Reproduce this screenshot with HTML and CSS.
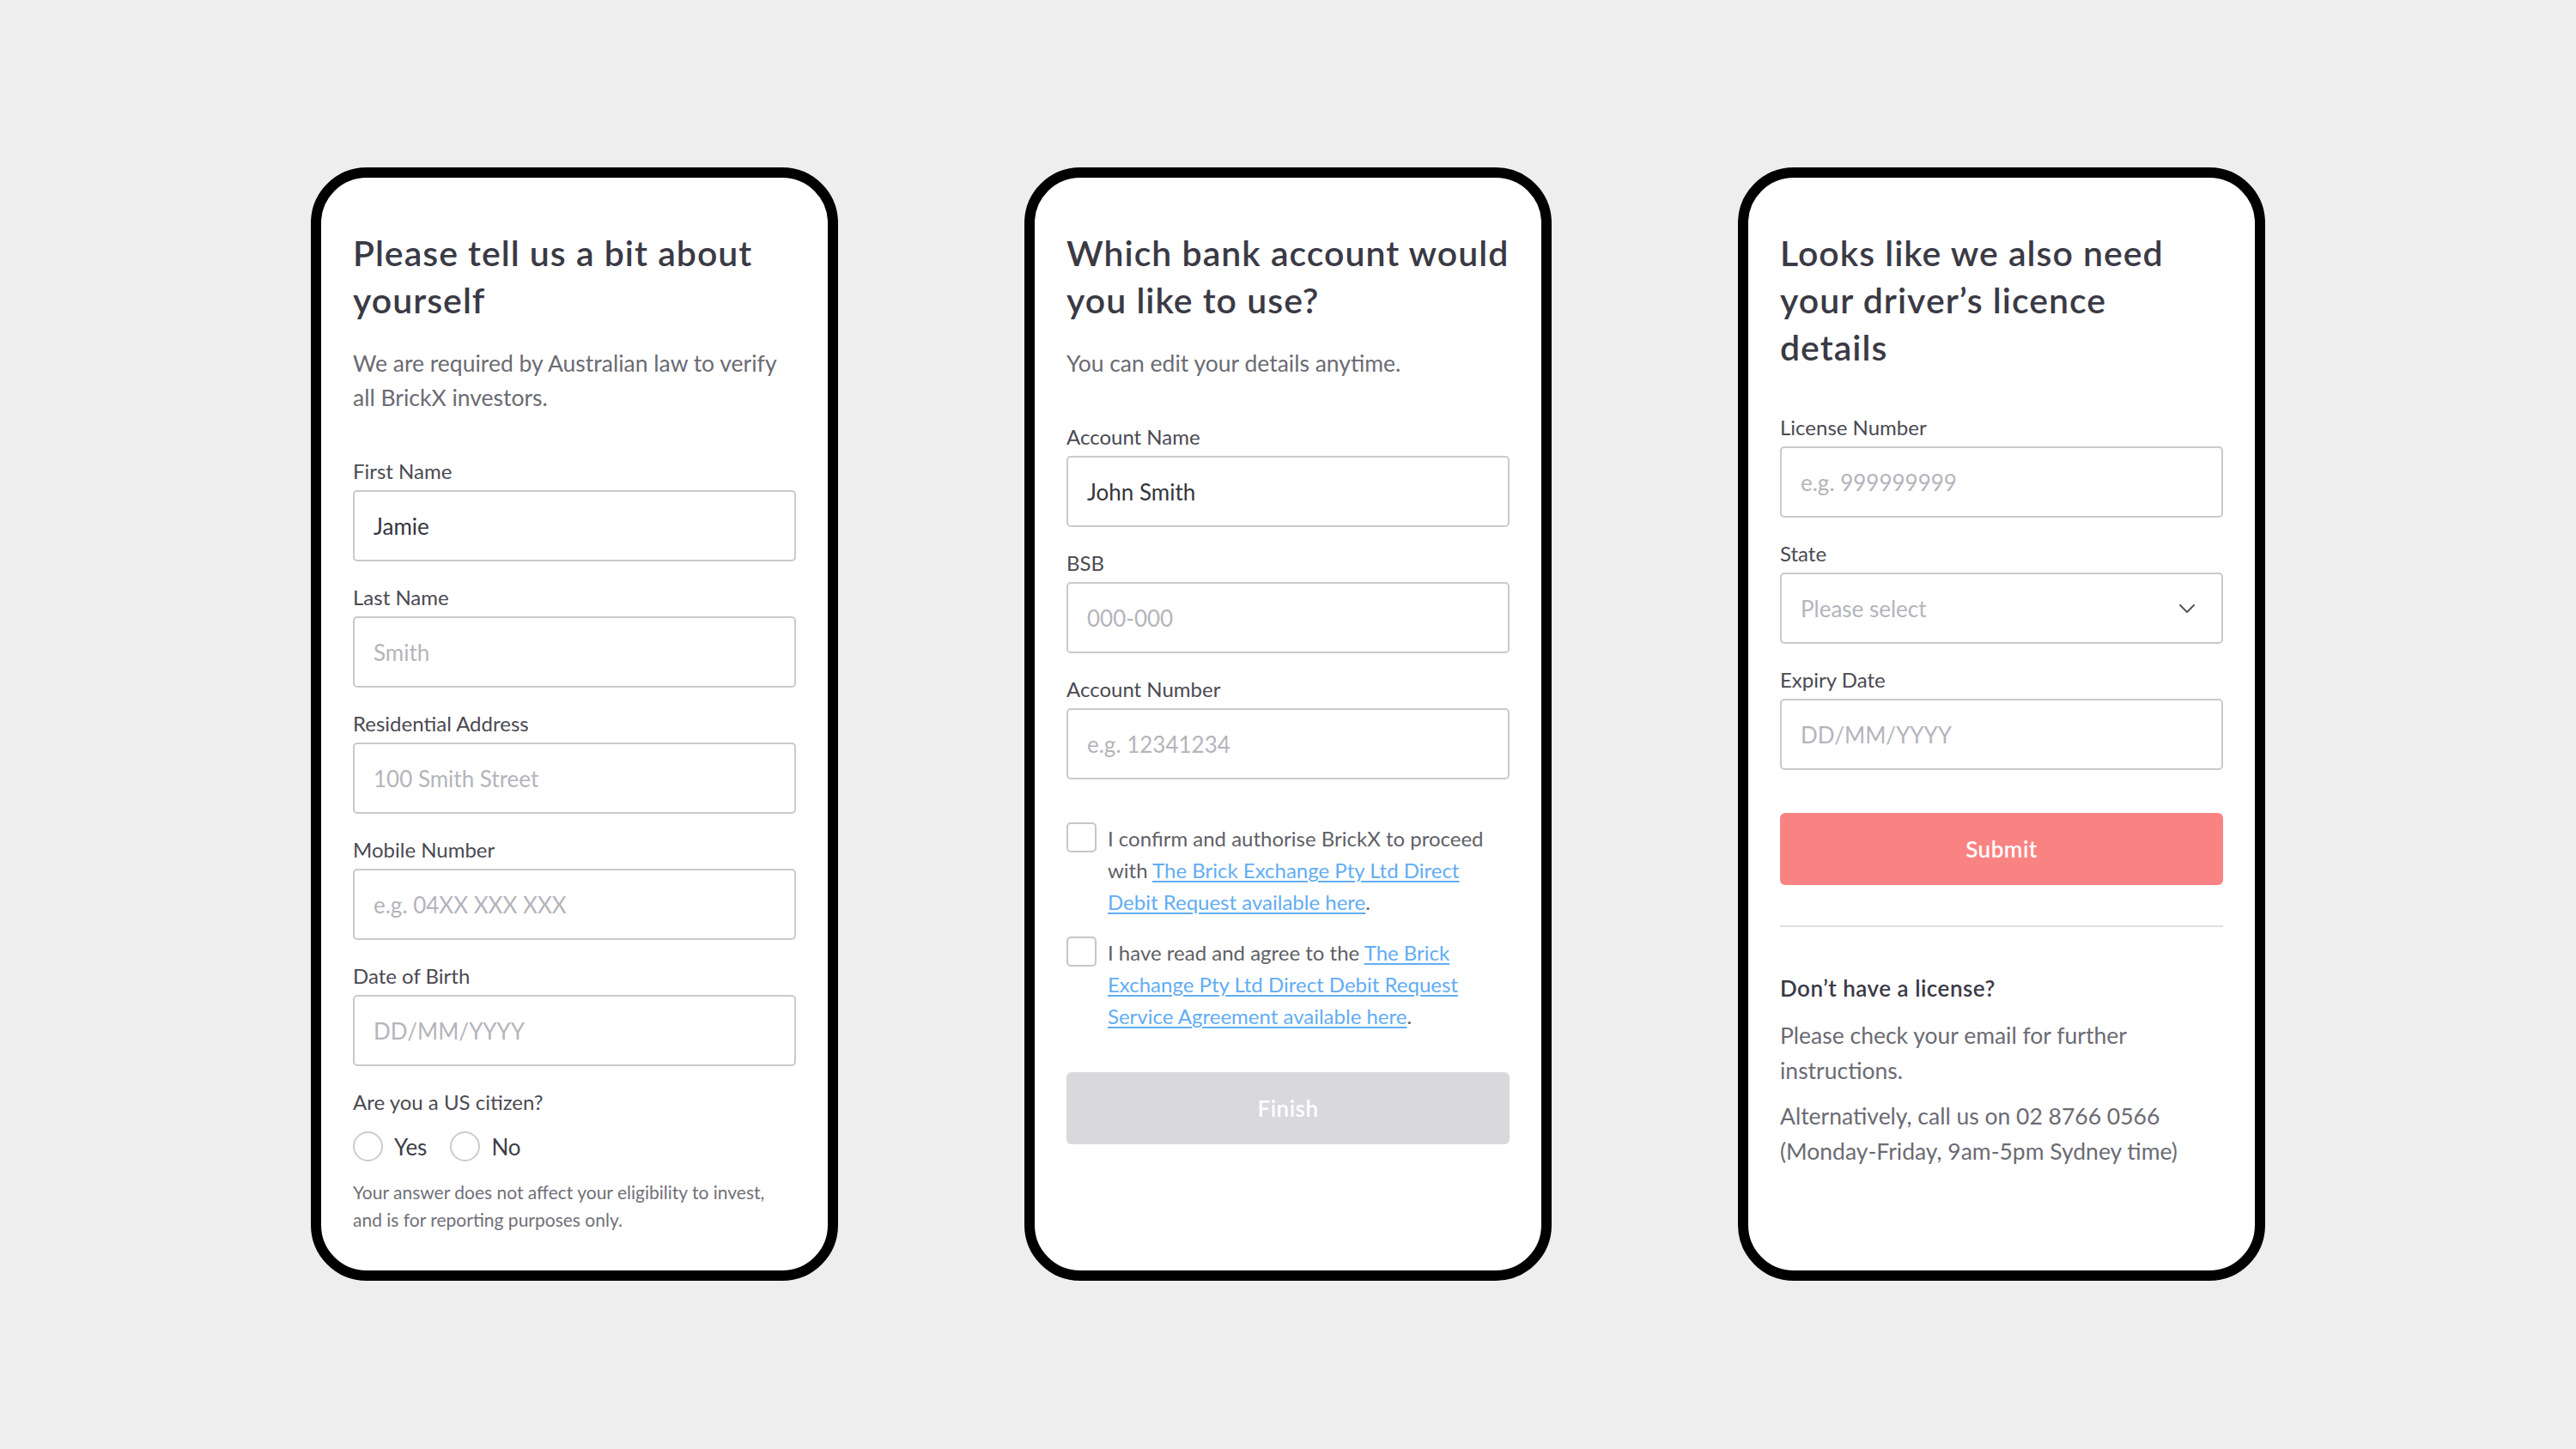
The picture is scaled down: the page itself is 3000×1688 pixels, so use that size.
FILE: index.html
```html
<!DOCTYPE html>
<html lang="en">
<head>
  <meta charset="UTF-8" />
  <meta name="viewport" content="width=device-width, initial-scale=1.0"/>
  <title>BrickX Onboarding Screens</title>
  <link rel="stylesheet" href="styles.css">
</head>
<body>

  <main class="screens">

    <!-- Step 1: personal details -->
    <section class="phone">
      <header class="intro">
        <h1 class="title">Please tell us a bit about<br>yourself</h1>
        <p class="lead">We are required by Australian law to verify<br>all BrickX investors.</p>
      </header>

      <div class="field">
        <label for="first-name">First Name</label>
        <input class="input" type="text" id="first-name" value="Jamie" />
      </div>
      <div class="field">
        <label for="last-name">Last Name</label>
        <input class="input" type="text" id="last-name" placeholder="Smith" />
      </div>
      <div class="field">
        <label for="address">Residential Address</label>
        <input class="input" type="text" id="address" placeholder="100 Smith Street" />
      </div>
      <div class="field">
        <label for="mobile">Mobile Number</label>
        <input class="input" type="text" id="mobile" placeholder="e.g. 04XX XXX XXX" />
      </div>
      <div class="field">
        <label for="dob">Date of Birth</label>
        <input class="input" type="text" id="dob" placeholder="DD/MM/YYYY" />
      </div>

      <div class="question">
        <label>Are you a US citizen?</label>
        <div class="radios">
          <span class="radio-option"><span class="radio"></span>Yes</span>
          <span class="radio-option"><span class="radio"></span>No</span>
        </div>
        <p class="note">Your answer does not affect your eligibility to invest,<br>and is for reporting purposes only.</p>
      </div>
    </section>

    <!-- Step 2: bank account -->
    <section class="phone">
      <header class="intro">
        <h1 class="title">Which bank account would<br>you like to use?</h1>
        <p class="lead">You can edit your details anytime.</p>
      </header>

      <div class="field">
        <label for="account-name">Account Name</label>
        <input class="input" type="text" id="account-name" value="John Smith" />
      </div>
      <div class="field">
        <label for="bsb">BSB</label>
        <input class="input" type="text" id="bsb" placeholder="000-000" />
      </div>
      <div class="field">
        <label for="account-number">Account Number</label>
        <input class="input" type="text" id="account-number" placeholder="e.g. 12341234" />
      </div>

      <div class="consents">
        <div class="consent">
          <span class="checkbox"></span>
          <p>I confirm and authorise BrickX to proceed<br>with <a href="#">The Brick Exchange Pty Ltd Direct<br>Debit Request available here</a>.</p>
        </div>
        <div class="consent">
          <span class="checkbox"></span>
          <p>I have read and agree to the <a href="#">The Brick<br>Exchange Pty Ltd Direct Debit Request<br>Service Agreement available here</a>.</p>
        </div>
      </div>

      <button class="btn btn-disabled" type="button">Finish</button>
    </section>

    <!-- Step 3: driver's licence -->
    <section class="phone">
      <header class="intro">
        <h1 class="title">Looks like we also need<br>your driver’s licence<br>details</h1>
      </header>

      <div class="field">
        <label for="licence">License Number</label>
        <input class="input" type="text" id="licence" placeholder="e.g. 999999999" />
      </div>
      <div class="field">
        <label>State</label>
        <div class="input select">
          <span class="placeholder">Please select</span>
          <svg class="chevron" width="18" height="10" viewBox="0 0 18 10"><polyline points="1,1 9,9 17,1" fill="none" stroke="#55555d" stroke-width="2" stroke-linecap="round" stroke-linejoin="round"/></svg>
        </div>
      </div>
      <div class="field">
        <label for="expiry">Expiry Date</label>
        <input class="input" type="text" id="expiry" placeholder="DD/MM/YYYY" />
      </div>

      <button class="btn btn-primary" type="button">Submit</button>

      <hr class="divider" />

      <div class="help">
        <h3>Don’t have a license?</h3>
        <p>Please check your email for further<br>instructions.</p>
        <p>Alternatively, call us on 02 8766 0566<br>(Monday-Friday, 9am-5pm Sydney time)</p>
      </div>
    </section>

  </main>

</body>
</html>
```

FILE: styles.css
```css
body {
  margin: 0;
  height: 1688px;
  overflow: hidden;
  background: #eeeeee;
  font-family: Lato, "Noto Sans", sans-serif;
  color: #393943;
}
.screens {
  display: flex;
  justify-content: center;
  gap: 217px;
  padding-top: 195px;
}
.phone {
  box-sizing: border-box;
  width: 614px;
  height: 1297px;
  border: 12px solid #000;
  border-radius: 65px;
  background: #fff;
  padding: 60px 37px 0;
}
.intro {
  margin-bottom: 51px;
}
.title {
  margin: 0;
  font-size: 41px;
  line-height: 55px;
  font-weight: 600;
  letter-spacing: 1px;
  color: #3a3a45;
}
.lead {
  margin: 26px 0 0;
  font-size: 26.5px;
  line-height: 40px;
  color: #6b6b73;
}
.field {
  margin-bottom: 27px;
}
.field label, .question label {
  display: block;
  font-size: 24px;
  line-height: 30px;
  color: #4a4a52;
  margin-bottom: 7px;
}
.input {
  box-sizing: border-box;
  display: block;
  width: 100%;
  height: 83px;
  border: 2px solid #c9c9ce;
  border-radius: 5px;
  padding: 0 22px;
  font-family: inherit;
  font-size: 26px;
  color: #35353d;
  background: #fff;
  outline: none;
}
.input::placeholder {
  color: #b4b4bb;
}
.select {
  display: flex;
  align-items: center;
  justify-content: space-between;
  padding-right: 31px;
}
.select .placeholder {
  color: #b4b4bb;
}
.radios {
  display: flex;
  align-items: center;
  margin-top: 19px;
  font-size: 26px;
  color: #3d3d46;
}
.radio-option {
  display: flex;
  align-items: center;
  gap: 13px;
  margin-right: 27px;
}
.radio {
  box-sizing: border-box;
  width: 35px;
  height: 35px;
  border: 2px solid #cbcbd0;
  border-radius: 50%;
}
.note {
  margin: 20px 0 0;
  font-size: 21px;
  line-height: 31.5px;
  color: #707078;
}
.consents {
  display: flex;
  flex-direction: column;
  gap: 22px;
  margin-top: 50px;
}
.consent {
  display: flex;
  gap: 13px;
}
.checkbox {
  box-sizing: border-box;
  flex-shrink: 0;
  width: 35px;
  height: 35px;
  border: 2px solid #c6c6cb;
  border-radius: 5px;
}
.consent p {
  margin: 0;
  font-size: 24px;
  line-height: 37px;
  color: #5f5f67;
}
.consent a {
  color: #62adf2;
  text-decoration: underline;
  text-underline-offset: 3px;
}
.btn {
  display: block;
  width: 100%;
  height: 84px;
  border: none;
  border-radius: 6px;
  font-family: inherit;
  font-size: 26px;
  font-weight: 600;
  letter-spacing: 0.5px;
  color: #fff;
}
.consents + .btn {
  margin-top: 47px;
}
.btn-disabled {
  background: #d8d8dd;
}
.btn-primary {
  margin-top: 50px;
  background: #f98383;
}
.divider {
  border: none;
  border-top: 2px solid #e0e0e4;
  margin: 47px 0 0;
}
.help h3 {
  margin: 53px 0 0;
  font-size: 26px;
  line-height: 36px;
  font-weight: 600;
  letter-spacing: 0.5px;
  color: #3a3a45;
}
.help p {
  margin: 12px 0 0;
  font-size: 26.5px;
  line-height: 41px;
  color: #6b6b73;
}
.help h3 + p {
  margin-top: 17px;
}
```
